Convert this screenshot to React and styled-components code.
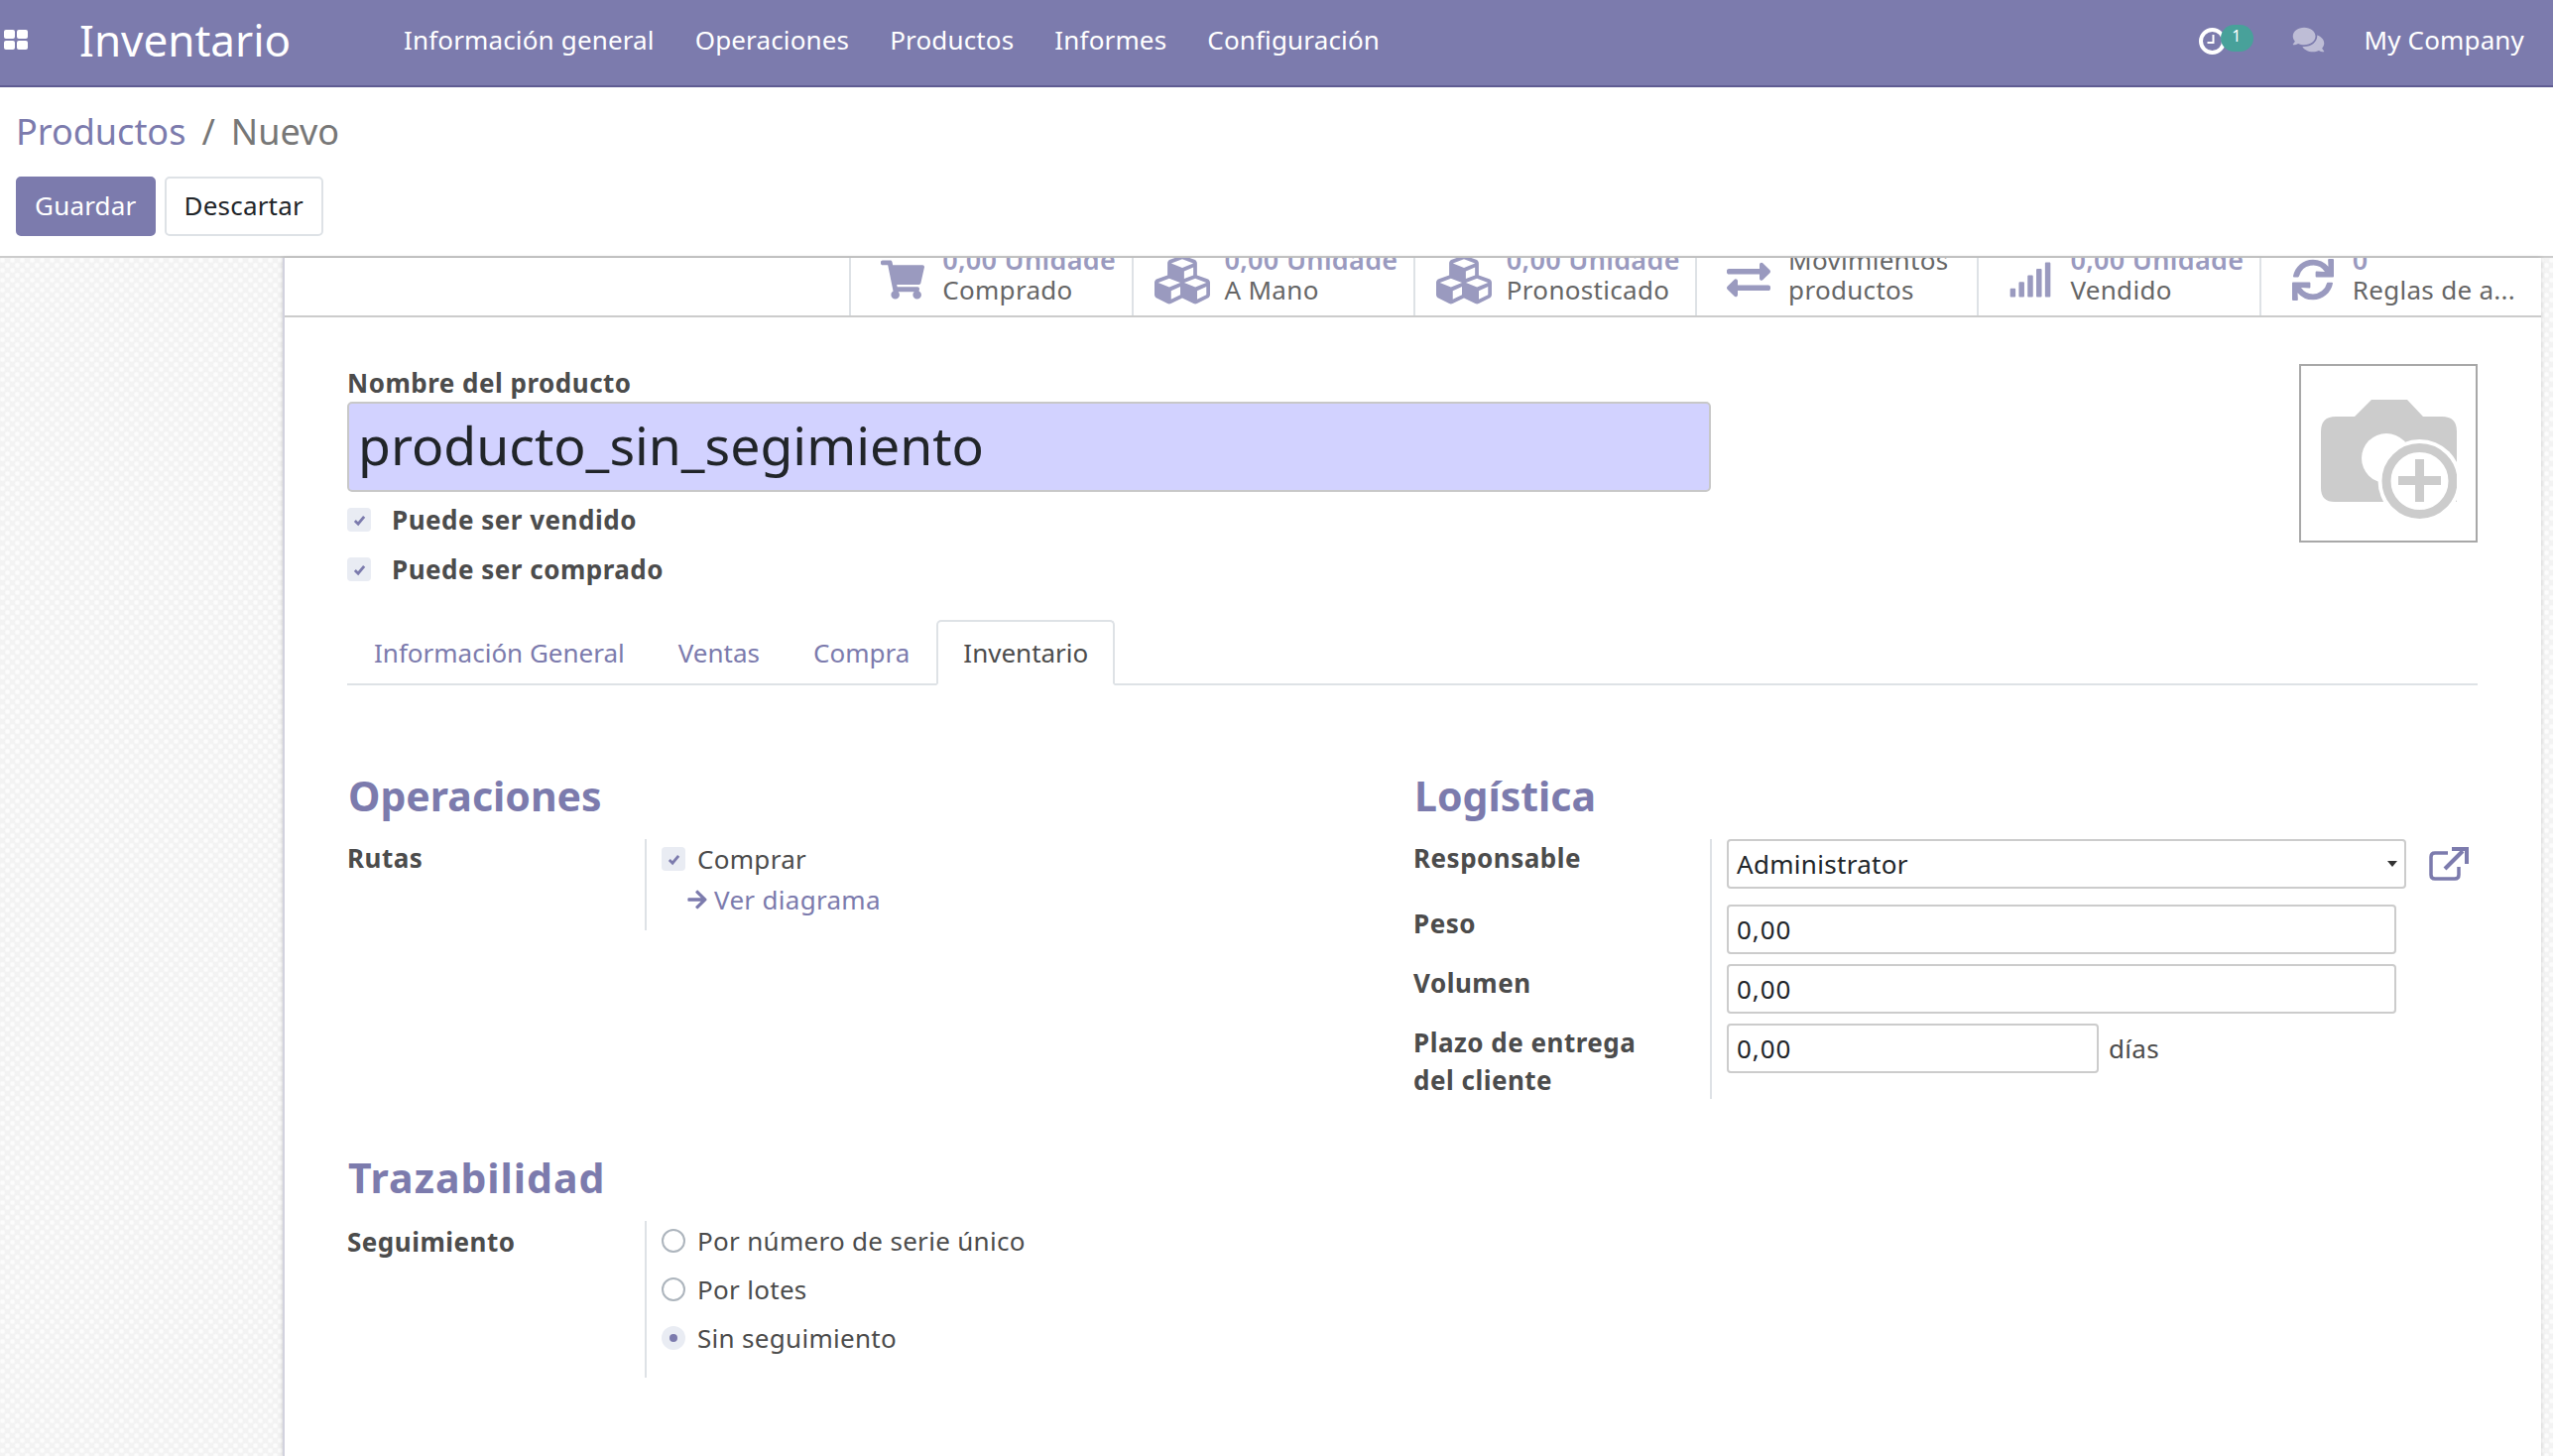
import React from 'react';
import styled, { createGlobalStyle } from 'styled-components';
import { FaShoppingCart, FaCubes, FaExchangeAlt, FaSignal, FaSync, FaArrowRight, FaComments } from 'react-icons/fa';

const Global = createGlobalStyle`
  html, body { margin: 0; padding: 0; height: 100%; background: #fff; }
  body { font-family: "Noto Sans", "DejaVu Sans", sans-serif; font-size: 26px; letter-spacing: .3px; color: #4c4c4c; overflow: hidden; }
  * { box-sizing: border-box; }
`;

const Page = styled.div`
  width: 2574px; height: 1468px; display: flex; flex-direction: column; overflow: hidden;
`;
const Navbar = styled.header`
  height: 88px; flex: none; background: #7c7bad; border-bottom: 2px solid #5f5c92; color: #fff;
  display: flex; align-items: center; padding: 0 29px 6px 4px;
`;
const AppsIcon = styled.svg`
  width: 24px; height: 20px; fill: #fff; flex: none; margin-left: 0;
`;
const Brand = styled.div`
  font-size: 44px; letter-spacing: 0; margin-left: 52px; width: 327px; flex: none;
`;
const Menu = styled.nav`
  display: flex; gap: 41px; flex: 1;
`;
const MenuItem = styled.span`
  font-size: 26px; letter-spacing: .15px;
`;
const Systray = styled.div`
  display: flex; align-items: center;
`;
const ClockWrap = styled.div`
  position: relative; width: 27px; height: 27px; margin-right: 67px;
`;
const Badge = styled.span`
  position: absolute; left: 22px; top: -2px; width: 33px; height: 27px; border-radius: 14px; padding-bottom: 4px;
  background: #48a19a; color: #fff; font-size: 16px; display: flex; align-items: center; justify-content: center;
`;
const ChatIcon = styled(FaComments)`
  width: 33px; height: 28px; color: #fff; opacity: .5; margin-right: 40px;
`;
const ControlPanel = styled.div`
  height: 172px; flex: none; border-bottom: 2px solid #ccc; padding: 20px 16px 0;
`;
const Breadcrumb = styled.div`
  font-size: 36px; letter-spacing: 0; color: #777; display: flex; gap: 16px; line-height: 50px;
`;
const Crumb = styled.span`
  color: ${p => p.$link ? '#7c7bad' : '#777'};
`;
const Buttons = styled.div`
  display: flex; gap: 9px; margin-top: 20px;
`;
const Button = styled.button`
  height: 60px; padding: 0 ${p => p.$primary ? '17px' : '18px'} 2px; border-radius: 5px; font: inherit; font-size: 26px; letter-spacing: .2px;
  background: ${p => p.$primary ? '#7c7bad' : '#fff'};
  color: ${p => p.$primary ? '#fff' : '#212529'};
  border: 2px solid ${p => p.$primary ? '#7c7bad' : '#dee2e6'};
`;
const Content = styled.main`
  flex: 1; min-height: 0; padding: 0 12px 0 285px; display: flex;
  background-color: #f3f3f3;
  background-image: radial-gradient(circle at 2.5px 2.5px, #fcfcfc 0, #fcfcfc 1.5px, transparent 3.2px), radial-gradient(circle at 7.5px 7.5px, #fcfcfc 0, #fcfcfc 1.5px, transparent 3.2px);
  background-size: 10px 10px;
`;
const Sheet = styled.div`
  flex: 1; background: #fff; box-shadow: 0 0 4px rgba(0,0,0,.18); border-left: 2px solid #d2d2de;
`;
const StatBar = styled.div`
  height: 60px; border-bottom: 2px solid #ccc; display: flex; justify-content: flex-end;
`;
const Stat = styled.div`
  width: 284.3px; flex: none; border-left: 2px solid #dee2e6; display: flex; align-items: flex-end; overflow: hidden;
  padding-left: 30px; gap: 18px;
`;
const StatIcon = styled.div`
  width: 44px; height: 46px; margin-bottom: 13px; color: #9a9abf; flex: none; display: flex; align-items: center; justify-content: center;
  svg { width: ${p => p.$size || 44}px; height: ${p => p.$size || 44}px; flex: none; margin-left: ${p => p.$shift || 0}px; }
`;
const StatText = styled.div`
  line-height: 30px; font-size: 26px; color: #666; white-space: nowrap; padding-bottom: 11px;
`;
const StatValue = styled.div`
  color: ${p => p.$plain ? '#666' : '#9a9abf'}; font-weight: ${p => p.$plain ? 400 : 600};
  font-size: ${p => p.$plain ? 26 : 27}px;
`;
const Form = styled.div`
  padding: 49px 64px 0 63px;
`;
const TitleRow = styled.div`
  display: flex; justify-content: space-between; align-items: flex-start; height: 256px;
`;
const TitleCol = styled.div`
  width: 1375px;
`;
const BoldLabel = styled.div`
  font-weight: 700; color: #4c4c4c; letter-spacing: .5px; line-height: 34px;
`;
const NameInput = styled.div`
  height: 91px; margin: 2px 0 3px; background: #d2d2ff; border: 2px solid #c8c8c8; border-radius: 5px;
  font-size: 53.5px; letter-spacing: 0; color: #212529; padding: 0 9px 5px; display: flex; align-items: center;
`;
const CheckRow = styled.div`
  display: flex; align-items: center; gap: 21px; height: 50px; font-weight: 700; letter-spacing: .5px;
`;
const Box = styled.span`
  width: 24px; height: 24px; background: #e9ecf3; border-radius: 4px; flex: none; display: flex; align-items: center; justify-content: center;
  svg { width: 13px; height: 13px; }
`;
const ImageBox = styled.div`
  width: 180px; height: 180px; margin-top: -2px; border: 2px solid #a8a8a8; display: flex; align-items: center; justify-content: center;
  padding-top: 11px;
`;
const Tabs = styled.div`
  display: flex; height: 66px; border-bottom: 2px solid #dee2e6; letter-spacing: 0;
`;
const Tab = styled.div`
  padding: 0 25px; display: flex; align-items: center; margin-bottom: -2px;
  color: ${p => p.$active ? '#4c4c4c' : '#7c7bad'};
  background: ${p => p.$active ? '#fff' : 'transparent'};
  border: 2px solid ${p => p.$active ? '#dee2e6' : 'transparent'};
  border-bottom-color: ${p => p.$active ? '#fff' : 'transparent'};
  border-radius: 5px 5px 0 0;
`;
const Columns = styled.div`
  display: grid; grid-template-columns: 1075px 1fr; margin-top: 83px;
`;
const Heading = styled.h2`
  margin: 0 0 16px 1px; font-size: 41px; line-height: 56px; font-weight: 700; color: #7c7bad;
  letter-spacing: ${p => p.$ls || 0}px;
`;
const Group = styled.div`
  display: grid; grid-template-columns: ${p => p.$label || 300}px 1fr;
`;
const GroupLabels = styled.div`
  padding-top: ${p => p.$pt || 0}px;
`;
const Fields = styled.div`
  border-left: 2px solid #dee2e6; padding-left: 15px;
`;
const FieldRow = styled.div`
  display: flex; align-items: center; gap: 10px; margin-bottom: ${p => p.$mb || 10}px;
`;
const TextInput = styled.div`
  height: 50px; width: ${p => p.$w}px; border: 2px solid #ccc; border-radius: 4px; padding: 0 8px;
  color: #212529; display: flex; align-items: center; justify-content: space-between; flex: none;
  letter-spacing: ${p => p.$num ? '.9px' : '.3px'};
`;
const Caret = styled.span`
  width: 0; height: 0; border-left: 5px solid transparent; border-right: 5px solid transparent; border-top: 6px solid #333; margin-right: -1px;
`;
const LogLabel = styled.div`
  font-weight: 700; letter-spacing: .5px; line-height: 38px; height: ${p => p.$h}px;
`;
const LinkIcon = styled.svg`
  margin-left: 12px; flex: none;
`;
const LinkLine = styled.div`
  color: #7c7bad; display: flex; align-items: center; gap: 6px; margin: 2px 0 12px 25px; line-height: 38px;
  svg { width: 22px; height: 22px; }
`;
const Radio = styled.span`
  width: 24px; height: 24px; border-radius: 50%; flex: none; display: flex; align-items: center; justify-content: center;
  border: ${p => p.$on ? 'none' : '2px solid #adb5bd'}; background: ${p => p.$on ? '#e9ecf3' : '#fff'};
  &::after { content: ''; display: ${p => p.$on ? 'block' : 'none'}; width: 8px; height: 8px; border-radius: 50%; background: #7c7bad; }
`;
const Tracking = styled.div`
  margin-top: 51px;
`;
const Options = styled.div`
  display: flex; flex-direction: column; gap: 13px; padding: 2px 0 22px;
`;
const Option = styled.div`
  display: flex; align-items: center; gap: 12px; height: ${p => p.$h || 36}px; color: #4c4c4c;
`;

const Check = () => (
  <svg viewBox="0 0 14 14"><path d="M2 7.5 L5.5 11 L12 3" fill="none" stroke="#7c7bad" strokeWidth="3" /></svg>
);

const Camera = () => (
  <svg width="137" height="120" viewBox="0 0 137 120">
    <path fill="#ccc" d="M51 0 H87 L103 17 H122 Q137 17 137 32 V103 H14 Q0 103 0 89 V32 Q0 17 15 17 H34 Z" />
    <circle cx="66" cy="59" r="25" fill="#fff" />
    <circle cx="99.5" cy="82" r="42" fill="#fff" />
    <circle cx="99.5" cy="82" r="33.5" fill="none" stroke="#ccc" strokeWidth="9" />
    <path fill="#ccc" d="M95 60 h9 v17 h17 v9 h-17 v17 h-9 v-17 h-17 v-9 h17 Z" />
  </svg>
);

const stats = [
  { icon: <FaShoppingCart />, size: 44, shift: -1, value: '0,00 Unidade', label: 'Comprado' },
  { icon: <FaCubes />, size: 56, shift: -5, value: '0,00 Unidade', label: 'A Mano' },
  { icon: <FaCubes />, size: 56, shift: -5, value: '0,00 Unidade', label: 'Pronosticado' },
  { icon: <FaExchangeAlt />, size: 44, shift: -1, value: 'Movimientos', label: 'productos', plain: true },
  { icon: <FaSignal />, size: 44, value: '0,00 Unidade', label: 'Vendido' },
  { icon: <FaSync />, size: 42, value: '0', label: 'Reglas de a...' },
];

export default function App() {
  return (
    <Page>
      <Global />
      <Navbar>
        <AppsIcon viewBox="0 0 24 20">
          <rect x="0" y="0" width="11" height="9" rx="2" />
          <rect x="13" y="0" width="11" height="9" rx="2" />
          <rect x="0" y="11" width="11" height="9" rx="2" />
          <rect x="13" y="11" width="11" height="9" rx="2" />
        </AppsIcon>
        <Brand>Inventario</Brand>
        <Menu>
          {['Información general', 'Operaciones', 'Productos', 'Informes', 'Configuración'].map(m => <MenuItem key={m}>{m}</MenuItem>)}
        </Menu>
        <Systray>
          <ClockWrap>
            <svg width="27" height="27" viewBox="0 0 27 27" fill="none" stroke="#fff">
              <circle cx="13.5" cy="13.5" r="11.5" strokeWidth="4" />
              <path d="M14.5 7 V15 H8.5" strokeWidth="2" />
            </svg>
            <Badge>1</Badge>
          </ClockWrap>
          <ChatIcon />
          <MenuItem>My Company</MenuItem>
        </Systray>
      </Navbar>
      <ControlPanel>
        <Breadcrumb><Crumb $link>Productos</Crumb><Crumb>/</Crumb><Crumb>Nuevo</Crumb></Breadcrumb>
        <Buttons>
          <Button $primary>Guardar</Button>
          <Button>Descartar</Button>
        </Buttons>
      </ControlPanel>
      <Content>
        <Sheet>
          <StatBar>
            {stats.map(s => (
              <Stat key={s.label}>
                <StatIcon $size={s.size} $shift={s.shift}>{s.icon}</StatIcon>
                <StatText>
                  <StatValue $plain={s.plain}>{s.value}</StatValue>
                  <div>{s.label}</div>
                </StatText>
              </Stat>
            ))}
          </StatBar>
          <Form>
            <TitleRow>
              <TitleCol>
                <BoldLabel>Nombre del producto</BoldLabel>
                <NameInput>producto_sin_segimiento</NameInput>
                <CheckRow><Box><Check /></Box>Puede ser vendido</CheckRow>
                <CheckRow><Box><Check /></Box>Puede ser comprado</CheckRow>
              </TitleCol>
              <ImageBox><Camera /></ImageBox>
            </TitleRow>
            <Tabs>
              <Tab>Información General</Tab>
              <Tab>Ventas</Tab>
              <Tab>Compra</Tab>
              <Tab $active>Inventario</Tab>
            </Tabs>
            <Columns>
              <div>
                <Heading>Operaciones</Heading>
                <Group>
                  <GroupLabels><LogLabel>Rutas</LogLabel></GroupLabels>
                  <Fields>
                    <Option $h={40}><Box><Check /></Box>Comprar</Option>
                    <LinkLine><FaArrowRight />Ver diagrama</LinkLine>
                  </Fields>
                </Group>
              </div>
              <div>
                <Heading>Logística</Heading>
                <Group $label={299}>
                  <GroupLabels>
                    <LogLabel $h={66}>Responsable</LogLabel>
                    <LogLabel $h={60}>Peso</LogLabel>
                    <LogLabel $h={60}>Volumen</LogLabel>
                    <LogLabel>Plazo de entrega<br />del cliente</LogLabel>
                  </GroupLabels>
                  <Fields>
                    <FieldRow $mb={16}>
                      <TextInput $w={685}>Administrator<Caret /></TextInput>
                      <LinkIcon width="42" height="36" viewBox="0 0 42 36" fill="none" stroke="#7c7bad" strokeWidth="3.5">
                        <path d="M20 7 H7 Q3 7 3 11 V29 Q3 33 7 33 H27 Q31 33 31 29 V21" />
                        <path d="M17 23 L35 5" strokeWidth="4" />
                        <path d="M24 3 H39 V18" strokeWidth="4" />
                      </LinkIcon>
                    </FieldRow>
                    <FieldRow><TextInput $num $w={675}>0,00</TextInput></FieldRow>
                    <FieldRow><TextInput $num $w={675}>0,00</TextInput></FieldRow>
                    <FieldRow $mb={24}><TextInput $num $w={375}>0,00</TextInput>días</FieldRow>
                  </Fields>
                </Group>
              </div>
            </Columns>
            <Tracking>
              <Heading $ls={1}>Trazabilidad</Heading>
              <Group>
                <GroupLabels $pt={2}><LogLabel>Seguimiento</LogLabel></GroupLabels>
                <Fields>
                  <Options>
                    <Option><Radio />Por número de serie único</Option>
                    <Option><Radio />Por lotes</Option>
                    <Option><Radio $on />Sin seguimiento</Option>
                  </Options>
                </Fields>
              </Group>
            </Tracking>
          </Form>
        </Sheet>
      </Content>
    </Page>
  );
}
